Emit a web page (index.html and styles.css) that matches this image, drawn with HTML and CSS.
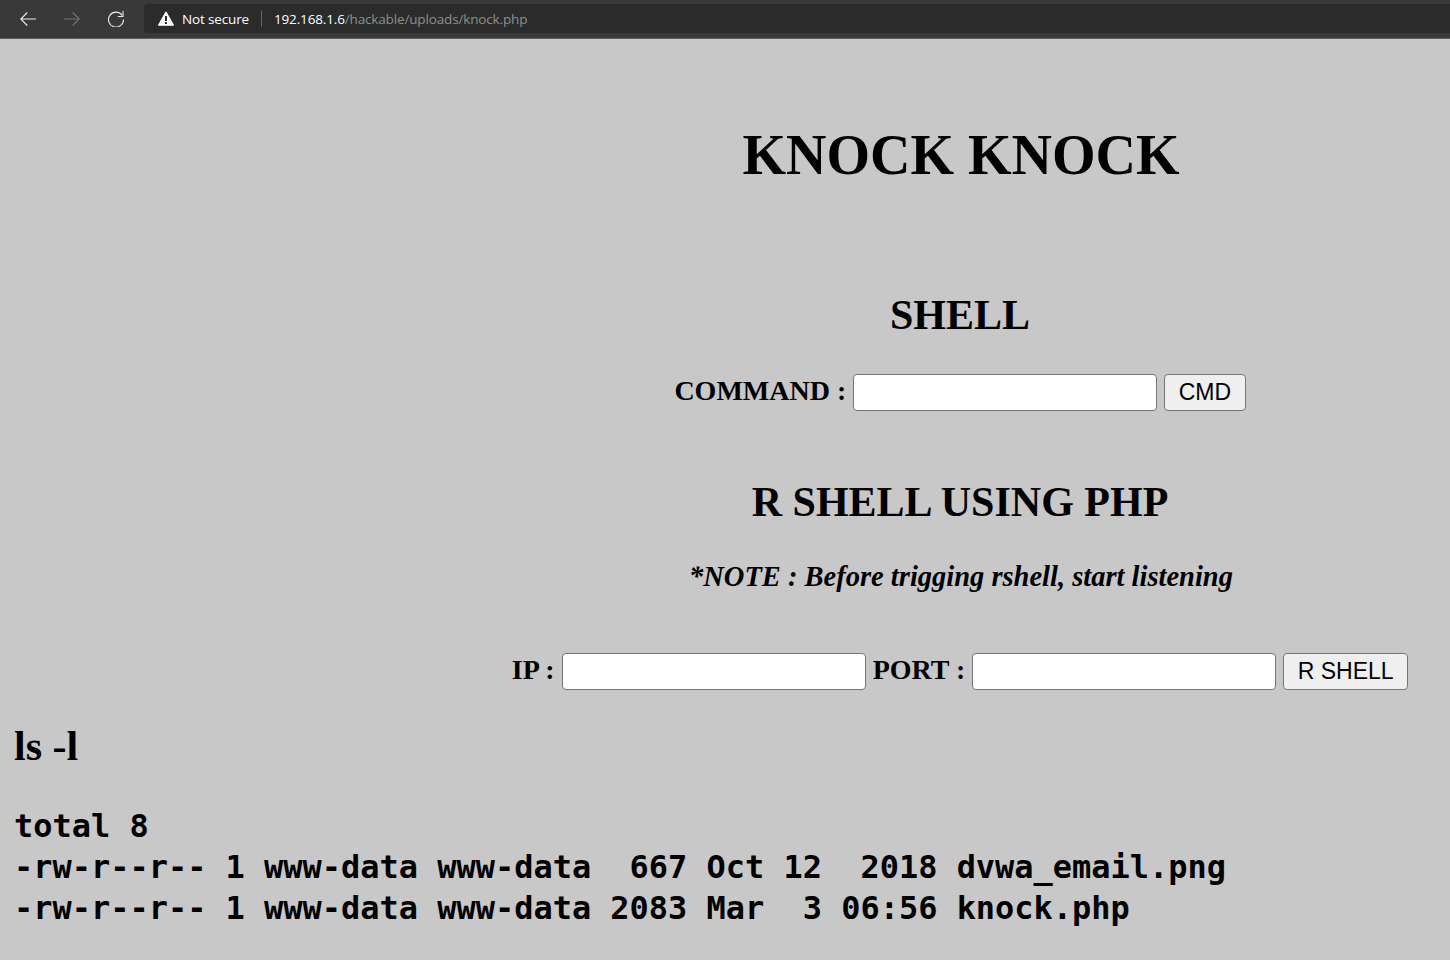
FILE: index.html
```html
<!DOCTYPE html>
<html>
<head>
<meta charset="utf-8">
<title>knock.php</title>
<link rel="stylesheet" href="styles.css">
</head>
<body>
<header class="toolbar">
  <nav class="nav">
    <svg class="icon" viewBox="0 0 16 16"><path d="M16 8H.8M7.3 1.5.8 8l6.5 6.5" fill="none" stroke="#e8eaed" stroke-width="1.1"/></svg>
    <svg class="icon" viewBox="0 0 16 16"><path d="M0 8h15.2M8.7 1.5 15.2 8l-6.5 6.5" fill="none" stroke="#737373" stroke-width="1.1"/></svg>
    <svg class="icon" viewBox="0 0 16 16"><path d="M14.2 4.4A7.5 7.5 0 1 0 15.5 8.5" fill="none" stroke="#e8eaed" stroke-width="1.1"/><path d="M15 0v5.5H9.7" fill="none" stroke="#e8eaed" stroke-width="1.1"/></svg>
  </nav>
  <div class="omnibox">
    <svg class="warn" viewBox="0 0 16 15"><path d="M8 .8 15.6 14.2H.4Z" fill="#fff" stroke="#fff" stroke-width="1" stroke-linejoin="round"/><path d="M7 5h2v5H7ZM7 11h2v2H7Z" fill="#2b2b2b"/></svg>
    <span class="secure">Not secure</span>
    <span class="sep"></span>
    <span class="url"><span class="host">192.168.1.6</span>/hackable/uploads/knock.php</span>
  </div>
</header>
<main class="page">
  <section class="panel">
    <h1 class="title">KNOCK KNOCK</h1>
    <h2 class="sub shell-head">SHELL</h2>
    <form class="row cmd-row">
      <label class="lbl">COMMAND :</label>
      <input class="field" type="text">
      <button class="btn" type="button">CMD</button>
    </form>
    <h2 class="sub r-head">R SHELL USING PHP</h2>
    <p class="note">*NOTE : Before trigging rshell, start listening</p>
    <form class="row ip-row">
      <label class="lbl">IP :</label>
      <input class="field" type="text">
      <label class="lbl">PORT :</label>
      <input class="field" type="text">
      <button class="btn" type="button">R SHELL</button>
    </form>
  </section>
  <h2 class="cmd-title">ls -l</h2>
  <pre class="output">total 8
-rw-r--r-- 1 www-data www-data  667 Oct 12  2018 dvwa_email.png
-rw-r--r-- 1 www-data www-data 2083 Mar  3 06:56 knock.php</pre>
</main>
</body>
</html>
```
FILE: styles.css
```css
* { box-sizing: border-box; }
html, body { margin: 0; height: 100%; }
body { background: #c8c8c8; color: #000; overflow: hidden; font-family: "Liberation Serif", serif; }
.toolbar { height: 39px; background: #393939; border-bottom: 1px solid #5e5e5e; padding: 4px 0 5px; display: flex; align-items: center; }
.nav { display: flex; gap: 28px; padding-left: 20px; width: 144px; }
.icon { width: 16px; height: 16px; }
.omnibox { flex: 1; height: 29px; background: #2b2b2b; border-radius: 4px 0 0 4px; display: flex; align-items: center; padding-left: 14px; font: 13.5px "Open Sans", sans-serif; letter-spacing: -0.15px; }
.warn { width: 16px; height: 15px; margin-right: 8px; }
.secure { color: #fff; }
.sep { width: 1px; height: 16px; background: #666; margin: 0 12px; }
.url { color: #8f8f8f; }
.host { color: #fff; }
.panel { margin-left: 470px; text-align: center; }
.title { margin: 0; padding: 84px 0 0 2px; font-size: 56px; line-height: 65px; font-weight: bold; }
.sub { margin: 0; font-size: 42px; line-height: 48px; font-weight: bold; }
.shell-head { margin-top: 103px; }
.row { display: flex; justify-content: center; align-items: center; gap: 7px; }
.cmd-row { margin-top: 35px; height: 37px; }
.r-head { margin-top: 67px; }
.note { margin: 0; padding: 34px 0 0 2px; font-size: 28.5px; line-height: 34px; font-style: italic; font-weight: bold; }
.ip-row { margin-top: 59px; height: 37px; }
.lbl { font-size: 28px; font-weight: bold; line-height: 34px; padding-bottom: 4px; }
.field { width: 304px; height: 37px; background: #fff; border: 1.5px solid #767676; border-radius: 4px; padding: 0; margin: 0; }
.btn { height: 37px; padding: 0 13.5px; background: #efefef; border: 1.5px solid #767676; border-radius: 4px; font: 23px "Liberation Sans", sans-serif; color: #000; margin: 0; }
.cmd-title { margin: 32px 0 0 14px; font-size: 42px; line-height: 48px; font-weight: bold; }
.output { margin: 36px 0 0 14px; font: bold 31.96px/41px "DejaVu Sans Mono", monospace; }
```
